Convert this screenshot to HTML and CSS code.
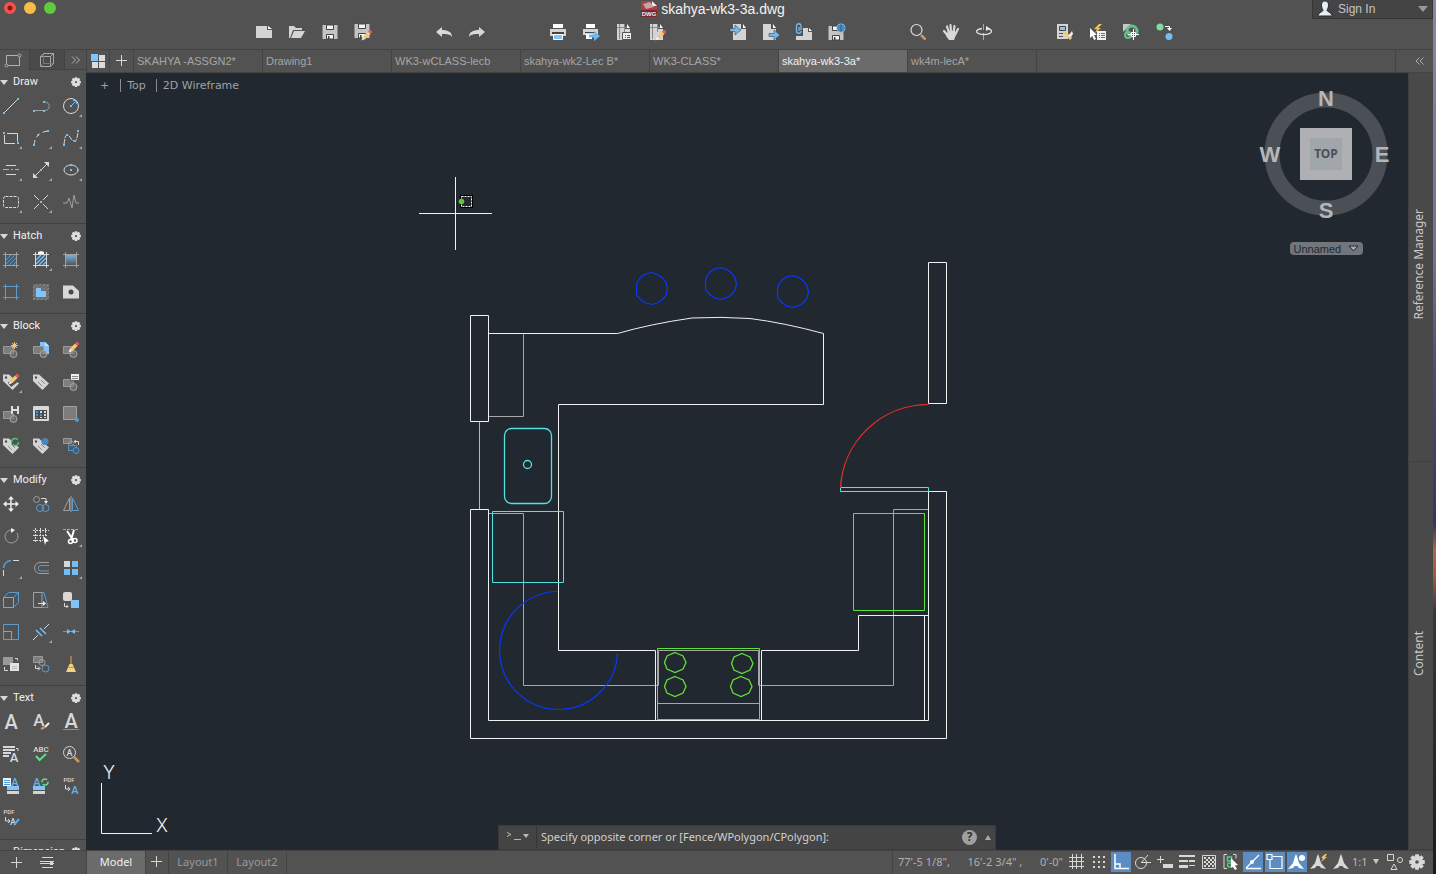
FILE: index.html
```html
<!DOCTYPE html>
<html lang="en">
<head>
<meta charset="utf-8">
<title>skahya-wk3-3a.dwg</title>
<link rel="stylesheet" href="styles.css">
</head>
<body>
<svg class="defs" aria-hidden="true">
  <symbol id="gear" viewBox="-8 -8 16 16"><g fill="currentColor"><g id="teeth"><path d="M-1.800-7.800h3.600l.5 3.500h-4.600zM-1.800 7.800h3.600l.5-3.500h-4.600z"/><path d="M-7.800-1.800v3.600l3.500.5v-4.600zM7.800-1.800v3.600l-3.500.5v-4.600z"/></g><use href="#teeth" transform="rotate(45)"/><path fill-rule="evenodd" d="M0-5.800A5.800 5.800 0 1 1 0 5.800 5.800 5.800 0 1 1 0-5.800zM0-1.800A1.800 1.800 0 1 0 0 1.800 1.800 1.800 0 1 0 0-1.800z"/></g></symbol>
  <g id="fly"><path fill="#a8a8a8" d="M11 8v3H8z"/></g>
  <g id="block"><path fill="#7d7d7d" stroke="#999" d="M-7.500-3.500h10v7h-10z"/><circle cx="2.500" cy="4" r="3.500" fill="#7d7d7d" fill-opacity=".6" stroke="#a5a5a5"/></g>
  <g id="tag"><path fill="#d4d4d4" d="M-8-7.500h6L8 1.500 1.500 8-8-1z"/><circle cx="-5" cy="-4.500" r="1.200" fill="#525252"/><path stroke="#8a8a8a" fill="none" d="M-3 0l4 4M0-2l4 4"/></g>
  <g id="pencil"><path fill="#f7c873" d="M-4 1.500L1-3.500 3.500-1-1.500 4z"/><path fill="#eee" d="M-4 1.500L-1.500 4-5.500 5.500z"/><path fill="#ea5a52" d="M1-3.500L3-5.500 5.500-3 3.500-1z"/></g>
  <g id="hatchframe"><path d="M-8-5.500H8M-8 5.500H8M-5.500-8V8M5.500-8V8"/></g>
  <g id="compass"><path d="M0-8C1.500-5 2-2 3 1l5 6-5-1-1.500-2h-3L-3 6l-5 1 5-6C-2-2-1.500-5 0-8z"/></g>
  <g id="sheet"><path fill="#d4d4d4" d="M-7-8h8v5h5v11H-7z"/><path fill="#fff" d="M3-8l3 4H3z"/></g>
  <g id="floppy"><path fill="#c4c4c4" d="M-7.500-7h15V7h-15z"/><path fill="#f4f4f4" stroke="#444" d="M-3.500-7h7v4.500h-7zM-3.500 2.500h7V7h-7z"/><path fill="#444" d="M-2 4h1.500v3H-2z"/></g>
  <g id="arrow"><path fill="#6fb9f0" d="M-5-1.500h5V-5L6 0 0 5V1.500h-5z"/></g>
</svg>

<div class="desktop">
<div class="app">
  <header class="top">
    <div class="titlebar">
      <div class="lights">
        <button class="light light-close" aria-label="Close"></button>
        <button class="light light-min" aria-label="Minimise"></button>
        <button class="light light-max" aria-label="Zoom"></button>
      </div>
      <h1 class="title">
        <svg class="doc" viewBox="0 0 16 16"><path fill="#a84044" d="M0 0h11l5 5v11H0z"/><path fill="#eee" d="M11 0l5 5h-5z"/><path fill="#c8a3a5" d="M2 3l7-2 4 5-8 2z"/><path fill="#7c2529" d="M0 9h16v7H0z"/><text x="8" y="15" text-anchor="middle">DWG</text></svg>
        skahya-wk3-3a.dwg
      </h1>
      <button class="signin">
        <svg class="face" viewBox="0 0 16 16"><path fill="#e8edf3" stroke="#1d2530" d="M8 0c3 0 3.500 2 3.500 4.500S10 8.500 10 9.500s4.500 2 5.500 5.500H.5C1.500 11.500 6 10.500 6 9.500S4.500 7 4.500 4.500 5 0 8 0z"/></svg>
        <span>Sign In</span>
        <svg class="caret" viewBox="0 0 10 6"><path d="M0 0h10L5 6z"/></svg>
      </button>
    </div>
    <nav class="toolbar" aria-label="Main toolbar">
      <div class="group">
        <button aria-label="New"><svg class="ic" viewBox="-11 -11 22 22"><path fill="#d4d4d4" d="M-8-6H3v4h5v8H-8z"/><path fill="#fff" d="M4-6l4 3H4z"/></svg></button>
        <button aria-label="Open"><svg class="ic" viewBox="-11 -11 22 22"><path fill="#d4d4d4" d="M-8 6V-6h5l2 2h6v2H-4l-3 8z"/><path fill="#d4d4d4" d="M-3-1H8L4 6H-6z"/></svg></button>
        <button aria-label="Save"><svg class="ic" viewBox="-11 -11 22 22"><use href="#floppy"/></svg></button>
        <button aria-label="Save As"><svg class="ic" viewBox="-11 -11 22 22"><use href="#floppy" x="-1" y="-1"/><use href="#pencil" x="4" y="3"/></svg></button>
      </div>
      <div class="group">
        <button aria-label="Undo"><svg class="ic" viewBox="-11 -11 22 22"><path fill="#d8d8d8" d="M-8 0l6-5v3C4-2 8 0 8 5 6 2 3 2-2 2v3z"/></svg></button>
        <button aria-label="Redo"><svg class="ic" viewBox="-11 -11 22 22"><path fill="#d8d8d8" d="M8 0L2-5v3C-4-2-8 0-8 5-6 2-3 2 2 2v3z"/></svg></button>
      </div>
      <div class="group">
        <button aria-label="Plot"><svg class="ic" viewBox="-11 -11 22 22"><path fill="#fff" d="M-5-8H5v4H-5z"/><path fill="#d4d4d4" d="M-8-3H8v7H-8z"/><path fill="#444" d="M-6 0H6v2H-6z"/><path fill="#82c4fa" stroke="#fff" d="M-4.500 2.500h9v5h-9z"/></svg></button>
        <button aria-label="Publish"><svg class="ic" viewBox="-11 -11 22 22"><path fill="#fff" d="M-5-8H4v4h-9z"/><path fill="#d4d4d4" d="M-8-3H7v6H-8z"/><path fill="#444" d="M-6 0H5v1H-6z"/><path fill="#fff" d="M-5 2h6v5h-6z"/><use href="#arrow" x="3" y="4"/></svg></button>
        <button aria-label="Page setup"><svg class="ic" viewBox="-11 -11 22 22"><use href="#sheet"/><path stroke="#888" d="M-7-4.500H3M-4.500-8V7M.5-8v8"/><path fill="#eee" stroke="#555" d="M-1.500.5h9v7h-9z"/><path stroke="#555" d="M1 3.500h1M3 3.500h3M1 5.500h1M3 5.500h3"/></svg></button>
        <button aria-label="Edit page setup"><svg class="ic" viewBox="-11 -11 22 22"><use href="#sheet"/><path stroke="#888" d="M-7-4.500H3M-4.500-8V7M.5-8v8"/><use href="#pencil" x="4" y="3"/></svg></button>
      </div>
      <div class="group">
        <button aria-label="Import"><svg class="ic" viewBox="-11 -11 22 22"><use href="#sheet" x="2"/><use href="#arrow" x="-3" y="-2" stroke="#444" stroke-width=".6"/></svg></button>
        <button aria-label="Export"><svg class="ic" viewBox="-11 -11 22 22"><use href="#sheet" x="-1"/><use href="#arrow" x="3" y="3" stroke="#444" stroke-width=".6"/></svg></button>
        <button aria-label="Attach"><svg class="ic" viewBox="-11 -11 22 22"><path fill="#d4d4d4" d="M-1-4h5v4h4v8H-8V4h7z"/><path fill="#fff" d="M5-4l3 3H5z"/><path fill="none" stroke="#6fb9f0" stroke-width="1.300" d="M-3-2v-4a2.200 2.200 0 0 0-4.500 0v5a2.200 2.200 0 0 0 4.500 0M-5-5v4"/></svg></button>
        <button aria-label="Save to web"><svg class="ic" viewBox="-11 -11 22 22"><use href="#floppy" x="-1" y="1"/><circle cx="4" cy="-4" r="4.500" fill="#6fb9f0"/><path fill="none" stroke="#2b5d86" d="M0-4h8M4-8v8M1-6h6M1-2h6"/></svg></button>
      </div>
      <div class="group">
        <button aria-label="Zoom view"><svg class="ic" viewBox="-11 -11 22 22"><circle cx="-1.500" cy="-2" r="5.500" fill="none" stroke="#ddd" stroke-width="1.200"/><path stroke="#c99a66" stroke-width="2.500" d="M3 3l4.500 4.500"/></svg></button>
        <button aria-label="Pan"><svg class="ic" viewBox="-11 -11 22 22"><path fill="none" stroke="#d8d8d8" stroke-width="2.200" stroke-linecap="round" d="M-7-1l4 5M-4-5.500L-2 1M-.5-7L0 1M3.500-6L2.500 1M7-3L4 3"/><path fill="#d8d8d8" d="M-3-1l7-.5 1 4L3 8h-5l-3-4z"/></svg></button>
        <button aria-label="Orbit"><svg class="ic" viewBox="-11 -11 22 22"><path stroke="#6fb9f0" d="M-.5-8V-2M-.5 1V8"/><path fill="none" stroke="#ddd" stroke-width="1.300" d="M-2-3.500C-5-3-7.500-2-7.500-.5S-4 2.500 0 2.500 7.500 1 7.500-.5 6-3 3-3.500"/><path fill="#eee" d="M2-6l4 2.500L2-1z"/></svg></button>
      </div>
      <div class="group">
        <button aria-label="Properties"><svg class="ic" viewBox="-11 -11 22 22"><path fill="#d4d4d4" d="M-8-8H3V7H-8z"/><path fill="#82c4fa" stroke="#444" d="M-5.500-5.500h6v4h-6z"/><path stroke="#555" d="M-6 1.500h4M-6 4.500h4"/><path stroke="#f7c873" stroke-width="3" d="M-1-.5l7 7.500"/><path fill="#eee" d="M7-1L3 4l3 1 2-3z"/></svg></button>
        <button aria-label="Quick select"><svg class="ic" viewBox="-11 -11 22 22"><path fill="#f7c15c" d="M1-8l-5 5h3l-2 4 6-5H0l4-4z"/><path fill="#fff" d="M-8-4v10l2.500-2L-4 8l2-1-2-4h3z"/><path fill="#f2f2f2" d="M-1-1h9v9h-9z"/><path stroke="#2f7fc5" d="M1 1.500h1M3 1.500h4M1 3.500h1M3 3.500h4M1 5.500h1M3 5.500h4"/></svg></button>
        <button aria-label="Geographic location"><svg class="ic" viewBox="-11 -11 22 22"><path fill="#c8c8c8" d="M-8-8h8l-8 8z"/><circle cx="1" cy="-1" r="5" fill="none" stroke="#66c08a" stroke-width="3"/><circle cx="-3" cy="3" r="3" fill="none" stroke="#66c08a" stroke-width="2"/><path stroke="#fff" fill="#555" d="M2.500-3V8M-3 2.500H8M.5.500h4v4h-4z"/></svg></button>
        <button aria-label="Migrate settings"><svg class="ic" viewBox="-11 -11 22 22"><circle cx="-4" cy="-5" r="3.500" fill="#7fdc9f"/><circle cx="5" cy="4.500" r="3.500" fill="#74bdf5"/><path fill="none" stroke="#fff" d="M1-5.500h4.500V-3"/><path fill="#fff" d="M3-4h5L5.500-1z"/></svg></button>
      </div>
    </nav>
  </header>

  <div class="body">
    <aside class="palette" aria-label="Tool palette">
      <div class="modes">
        <button class="mode mode-on" aria-label="2D"><svg class="ic" viewBox="-11 -11 22 22"><path fill="none" stroke="#b0b0b0" d="M-6.500 4V-4.500H5M6.500-3v8.500H-5"/><circle cx="6.500" cy="-4.500" r="1.500" fill="none" stroke="#b0b0b0"/><circle cx="-6.500" cy="5.500" r="1.500" fill="none" stroke="#b0b0b0"/></svg></button>
        <button class="mode" aria-label="3D"><svg class="ic" viewBox="-11 -11 22 22"><path fill="none" stroke="#a8a8a8" d="M-6.500-3.500h10v10h-10zM-6.500-3.500l3-3h10v10l-3 3M3.500-3.500l3-3"/><path fill="none" stroke="#777" d="M-3.500-6v9.500h9.500M-3.500 3.500l-3 3"/></svg></button>
        <button class="mode mode-more" aria-label="More"><svg class="chev" viewBox="0 0 10 8"><path d="M1 .5l3.500 3.500L1 7.500M5 .5l3.500 3.500L5 7.500"/></svg></button>
      </div>
      <div class="sections">
        <section class="section">
          <h2 class="head"><span class="tri"></span>Draw<button aria-label="Draw settings"><svg class="cog"><use href="#gear"/></svg></button></h2>
          <div class="tools">
            <button aria-label="Line"><svg class="ic" viewBox="-11 -11 22 22"><path class="s" d="M-7 7L7-7"/><path class="fb" d="M-8 6h2v2h-2zM6-8h2v2H6z"/></svg></button>
            <button aria-label="Polyline"><svg class="ic" viewBox="-11 -11 22 22"><path class="m" d="M-7 4.500H4a4.200 4.200 0 0 0 0-8.500H2"/><path class="fb" d="M-8 4h2v2h-2zM2 4h2v2H2zM2-5h2v2H2z"/></svg></button>
            <button aria-label="Circle"><svg class="ic" viewBox="-11 -11 22 22"><circle class="s" r="7.500"/><path class="fb" d="M-1-1h2v2h-2z"/><path class="b" d="M1-1l4-4M2-5.500h3.500V-2"/><use href="#fly"/></svg></button>
            <button aria-label="Rectangle"><svg class="ic" viewBox="-11 -11 22 22"><path class="s" d="M-4-4.500H6.500v8M4 5.500H-6.500V-3"/><path class="fb" d="M-8-6h2v2h-2zM6 4h2v2H6z"/><use href="#fly"/></svg></button>
            <button aria-label="Arc"><svg class="ic" viewBox="-11 -11 22 22"><path class="s" stroke-dasharray="5 3" d="M-7 7C-6-2-1-6 7-7"/><path class="fb" d="M-8 6h2v2h-2zM-4-4h2v2h-2zM6-8h2v2H6z"/><use href="#fly"/></svg></button>
            <button aria-label="Spline"><svg class="ic" viewBox="-11 -11 22 22"><path class="s" stroke-dasharray="5 1" d="M-7 6C-6 0-6-3-3.500-3S0 3 3 3 6 0 7-6"/><path class="fb" d="M-8 6h2v2h-2zM-5-4h2v2h-2zM3 2h2v2H3zM6-8h2v2H6z"/><use href="#fly"/></svg></button>
            <button aria-label="Multiline"><svg class="ic" viewBox="-11 -11 22 22"><path class="s" d="M-5-4.500H5M-5 4.500H5"/><path class="b" d="M-8-.5h6M0-.5h2M4-.5h4"/><use href="#fly"/></svg></button>
            <button aria-label="Construction line"><svg class="ic" viewBox="-11 -11 22 22"><path class="s" d="M-6 6L6-6"/><path class="fl" d="M-8 8v-5l5 5zM8-8v5L3-8z"/><path class="fb" d="M-1-1h2v2h-2z"/><use href="#fly"/></svg></button>
            <button aria-label="Ellipse"><svg class="ic" viewBox="-11 -11 22 22"><ellipse class="s" rx="7" ry="5"/><path class="fb" d="M-1-6h2v2h-2zM-1-1h2v2h-2zM6-1h2v2H6z"/><use href="#fly"/></svg></button>
            <button aria-label="Revision cloud"><svg class="ic" viewBox="-11 -11 22 22"><rect class="s" x="-7.500" y="-5.500" width="15" height="11" rx="2" stroke-dasharray="3 1"/><use href="#fly"/></svg></button>
            <button aria-label="Point"><svg class="ic" viewBox="-11 -11 22 22"><path class="s" d="M-7-7l5 5M7-7L2-2M-7 7l5-5M2 2l5 5"/><path class="fb" d="M-1-1h2v2h-2z"/><use href="#fly"/></svg></button>
            <button aria-label="Break line"><svg class="ic" viewBox="-11 -11 22 22"><path class="m" d="M-8 1h4l2-5L1 6 3-7 5 1h3"/></svg></button>
          </div>
        </section>
        <section class="section">
          <h2 class="head"><span class="tri"></span>Hatch<button aria-label="Hatch settings"><svg class="cog"><use href="#gear"/></svg></button></h2>
          <div class="tools">
            <button aria-label="Hatch"><svg class="ic" viewBox="-11 -11 22 22"><path fill="#3d5f7c" d="M-5-5H5V5H-5z"/><path class="b" d="M-5 0l5-5M-5 4l9-9M-2 5l7-7M2 5l3-3" opacity=".6"/><use href="#hatchframe" class="m"/></svg></button>
            <button aria-label="Hatch edit"><svg class="ic" viewBox="-11 -11 22 22"><path class="b" stroke-width="1.500" d="M-5 0l5-5M-5 4l9-9M-2 5l7-7M2 5l3-3"/><use href="#hatchframe" class="s"/><path fill="#fff" d="M-3-8l3-1 3 1v2h-6z"/><use href="#fly"/></svg></button>
            <button aria-label="Gradient"><svg class="ic" viewBox="-11 -11 22 22"><defs><linearGradient id="gr" x2="0" y2="1"><stop stop-color="#74b4e4"/><stop offset="1" stop-color="#555"/></linearGradient></defs><path fill="url(#gr)" d="M-5-5H5V5H-5z"/><use href="#hatchframe" class="m"/></svg></button>
            <button aria-label="Boundary"><svg class="ic" viewBox="-11 -11 22 22"><use href="#hatchframe" class="d"/></svg></button>
            <button aria-label="Region"><svg class="ic" viewBox="-11 -11 22 22"><path fill="#6b6b6b" d="M-8-8H8V8H-8z"/><path class="m" stroke-dasharray="1 1" d="M-8-4l4-4M-8 0l8-8M-8 4L4-8M-8 8L8-8M-4 8L8-4M0 8l8-8M4 8l4-4"/><path fill="#82c4fa" d="M-5-4h5v3h5v6H-5z"/></svg></button>
            <button aria-label="Wipeout"><svg class="ic" viewBox="-11 -11 22 22"><path class="fl" d="M-8-6.500H2L8-1v7.500H-8z"/><circle r="2.500" fill="#484848"/></svg></button>
          </div>
        </section>
        <section class="section">
          <h2 class="head"><span class="tri"></span>Block<button aria-label="Block settings"><svg class="cog"><use href="#gear"/></svg></button></h2>
          <div class="tools">
            <button aria-label="Create block"><svg class="ic" viewBox="-11 -11 22 22"><use href="#block"/><path stroke="#f7c15c" d="M3.500-8v7M0-4.500h7M1-7l5 5M6-7l-5 5"/><circle cx="3.500" cy="-4.500" r="2" fill="#f7c873"/></svg></button>
            <button aria-label="Insert block"><svg class="ic" viewBox="-11 -11 22 22"><path fill="#82c4fa" d="M-1-8h5l4 4v8H-1z"/><path fill="#c9e5fc" d="M4-8l4 4H4z"/><use href="#block"/></svg></button>
            <button aria-label="Edit block"><svg class="ic" viewBox="-11 -11 22 22"><use href="#block"/><use href="#pencil" x="3" y="-3"/></svg></button>
            <button aria-label="Edit attributes"><svg class="ic" viewBox="-11 -11 22 22"><use href="#tag"/><path fill="#525252" d="M-3 1L6-8l2 7-8 6z"/><use href="#pencil" x="3" y="-3"/><use href="#fly"/></svg></button>
            <button aria-label="Define attributes"><svg class="ic" viewBox="-11 -11 22 22"><use href="#tag"/></svg></button>
            <button aria-label="Block properties"><svg class="ic" viewBox="-11 -11 22 22"><use href="#block" y="1"/><path fill="#eee" stroke="#555" d="M-.5-8.500h9v7h-9z"/><path stroke="#888" d="M1-5.500h6M1-3.500h6"/></svg></button>
            <button aria-label="Save block"><svg class="ic" viewBox="-11 -11 22 22"><use href="#block" y="1"/><path fill="#ddd" d="M0-8h8v8H0z"/><path fill="#555" d="M2-8h4v3H2zM2-3h4v3H2z"/></svg></button>
            <button aria-label="Block table"><svg class="ic" viewBox="-11 -11 22 22"><rect class="fl" x="-8" y="-8" width="16" height="15" rx="1"/><path fill="#4a4a4a" d="M-6-4H6v9H-6z"/><path fill="#3b94dc" d="M-5-3h2v2h-2zM-5 0h2v2h-2zM-5 3h2v1h-2zM-1 0h2v2h-2z"/><path class="fl" d="M-1-3h2v2h-2zM3-3h2v2H3zM3 0h2v2H3zM-1 3h2v1h-2zM3 3h2v1H3z"/></svg></button>
            <button aria-label="Base point"><svg class="ic" viewBox="-11 -11 22 22"><path fill="#7d7d7d" stroke="#a0a0a0" d="M-7.500-7.500h13v13h-13z"/><circle cx="6" cy="6" r="2" fill="#4a9ddb"/></svg></button>
            <button aria-label="Sync attributes"><svg class="ic" viewBox="-11 -11 22 22"><use href="#tag"/><circle cx="4" cy="-4" r="3.500" fill="#525252" stroke="#46c878" stroke-width="1.500" stroke-dasharray="8 3"/></svg></button>
            <button aria-label="Manage attributes"><svg class="ic" viewBox="-11 -11 22 22"><use href="#tag"/><circle cx="4" cy="-4.500" r="3.500" fill="#4a86b8"/></svg></button>
            <button aria-label="Replace block"><svg class="ic" viewBox="-11 -11 22 22"><path fill="#777" stroke="#999" d="M-7.500-7.500h8v5h-8z"/><circle cx="0" cy="-2.500" r="2.500" fill="none" stroke="#999"/><path fill="#386085" stroke="#5794c4" d="M-2.500-.5h8v5h-8z"/><circle cx="5" cy="4.500" r="3" fill="#386085" stroke="#5794c4"/><path class="s" d="M3-4.500h4.500V-1M5-6L3-4.500 5-3"/></svg></button>
          </div>
        </section>
        <section class="section">
          <h2 class="head"><span class="tri"></span>Modify<button aria-label="Modify settings"><svg class="cog"><use href="#gear"/></svg></button></h2>
          <div class="tools">
            <button aria-label="Move"><svg class="ic" viewBox="-11 -11 22 22"><path stroke="#eee" stroke-width="1.500" d="M0-6V6M-6 0H6"/><path fill="#eee" d="M0-8l3 3.500h-6zM0 8l3-3.500h-6zM-8 0l3.500-3v6zM8 0L4.500-3v6z"/></svg></button>
            <button aria-label="Copy"><svg class="ic" viewBox="-11 -11 22 22"><circle class="m" cx="-4.500" cy="-4.500" r="3"/><circle class="d" cx="-1" cy="4" r="3.500"/><circle class="d" cx="4.500" cy="4" r="3.500"/><path class="s" d="M0-5.500h5V-3"/><path fill="#eee" d="M3-3h4L5 0z"/></svg></button>
            <button aria-label="Mirror"><svg class="ic" viewBox="-11 -11 22 22"><path class="m" d="M-1.500-6v12.500h-6zM0-8V8"/><path class="d" d="M1.500-6v12.500h6z"/></svg></button>
            <button aria-label="Rotate"><svg class="ic" viewBox="-11 -11 22 22"><path class="m" d="M1-6a6.500 6.500 0 1 0 5 3"/><path fill="#eee" d="M0-8l4 2-4 3z"/></svg></button>
            <button aria-label="Stretch"><svg class="ic" viewBox="-11 -11 22 22"><path class="s" stroke-dasharray="2 1" d="M-8-5.500H8M-8-.5H7M-8 4.500H2M-5.500-8V7M-.5-8V7M4.500-8v7"/><path fill="#fff" d="M2 0l6 5-3 1-1 3z"/></svg></button>
            <button aria-label="Trim"><svg class="ic" viewBox="-11 -11 22 22"><path class="b" stroke-dasharray="3 1" d="M-8-6.500H8"/><path stroke="#fff" stroke-width="2" d="M-4-5L2 4M3-6L0 4"/><circle cx="4" cy="4.500" r="2" fill="none" stroke="#fff" stroke-width="1.500"/><circle cx="-.5" cy="5.500" r="2" fill="none" stroke="#fff" stroke-width="1.500"/><use href="#fly"/></svg></button>
            <button aria-label="Fillet"><svg class="ic" viewBox="-11 -11 22 22"><path class="d" stroke-width="1.500" d="M-7.500 0C-7-4-4-7 0-7.500"/><path class="s" d="M-7.500 2v6M2-7.500h6"/><use href="#fly"/></svg></button>
            <button aria-label="Offset"><svg class="ic" viewBox="-11 -11 22 22"><path class="m" d="M8-5.500H-1a5.500 5.500 0 0 0 0 11h9"/><path class="d" d="M8-2.500H0a2.500 2.500 0 0 0 0 5.500h8"/></svg></button>
            <button aria-label="Array"><svg class="ic" viewBox="-11 -11 22 22"><path class="fl" d="M-7-7h6v6h-6z"/><path fill="#74bdf5" d="M1-7h6v6H1zM-7 1h6v6h-6zM1 1h6v6H1z"/><use href="#fly"/></svg></button>
            <button aria-label="Extrude"><svg class="ic" viewBox="-11 -11 22 22"><path class="d" d="M-7.500-2.500l5-5h10v10l-5 5M2.500-2.500l5-5"/><path class="m" d="M-7.500-2.500h10v10h-10z"/></svg></button>
            <button aria-label="Taper"><svg class="ic" viewBox="-11 -11 22 22"><path class="m" d="M1-7.500h-8.500v15H1z"/><path class="d" d="M1-7.500h2l4 15H1"/><path class="s" d="M-3 3.500h6"/><path fill="#eee" d="M2 1l3 2.500L2 6z"/></svg></button>
            <button aria-label="Change space"><svg class="ic" viewBox="-11 -11 22 22"><rect class="fl" x="-8" y="-8" width="9" height="9" rx="2"/><path fill="#82c4fa" d="M0 0h8v8H0z"/><path class="s" d="M-6.500 3v3.500H-3M-4.500 5l1.500 1.500L-4.500 8"/></svg></button>
            <button aria-label="Scale"><svg class="ic" viewBox="-11 -11 22 22"><path class="d" d="M-7.500-7.500h15v15h-15z"/><path class="m" d="M-7.500-.5h8v8"/></svg></button>
            <button aria-label="Break"><svg class="ic" viewBox="-11 -11 22 22"><path class="s" d="M-8 8l5-5M3-3l5-5"/><path class="b" stroke-width="1.500" d="M-5-2l6 6M-1-4l6 6"/><use href="#fly"/></svg></button>
            <button aria-label="Join"><svg class="ic" viewBox="-11 -11 22 22"><path class="d" d="M-8-.5H8"/><path fill="#74bdf5" d="M-4-3l4 2.500L-4 2zM4-3L0-.5 4 2z"/></svg></button>
            <button aria-label="Draw order"><svg class="ic" viewBox="-11 -11 22 22"><path fill="#9a9a9a" d="M-8-7H2v8H-8z"/><path fill="#e4e4e4" d="M-1-1h9v8h-9z"/><path stroke="#bbb" d="M1 2.500h5M1 4.500h5"/><path class="s" d="M4-5.500h2.500v2M-6.500 3v3.500H-3"/></svg></button>
            <button aria-label="Copy nested"><svg class="ic" viewBox="-11 -11 22 22"><path fill="#7d7d7d" stroke="#999" d="M-7.500-7.500h9v6h-9z"/><circle class="m" cx="1" cy="-1.500" r="3"/><circle class="d" cx="4.500" cy="4.500" r="3.500"/><path class="s" d="M-5.500 1v3.500h4M-3 2.500l2 2-2 2"/></svg></button>
            <button aria-label="Purge"><svg class="ic" viewBox="-11 -11 22 22"><path stroke="#b98a55" stroke-width="1.500" d="M0-8v9"/><path fill="#f7d27c" d="M-1.500 0h3L5 8H-5z"/><path stroke="#c98f42" d="M-2.500 3.500h5"/></svg></button>
          </div>
        </section>
        <section class="section">
          <h2 class="head"><span class="tri"></span>Text<button aria-label="Text settings"><svg class="cog"><use href="#gear"/></svg></button></h2>
          <div class="tools">
            <button aria-label="Multiline text"><svg class="ic" viewBox="-11 -11 22 22"><text class="g18" y="7">A</text></svg></button>
            <button aria-label="Text style"><svg class="ic" viewBox="-11 -11 22 22"><text class="g16" x="-2" y="4">A</text><path stroke="#eee" stroke-width="2" d="M8 1L4 5"/><path stroke="#c99a66" stroke-width="2.500" d="M4 5L0 7"/></svg></button>
            <button aria-label="Single line text"><svg class="ic" viewBox="-11 -11 22 22"><text class="g18" y="6">A</text><path class="d" d="M-8 7.500H8"/></svg></button>
            <button aria-label="Text align"><svg class="ic" viewBox="-11 -11 22 22"><path stroke="#d8d8d8" stroke-width="2" d="M-8-7H4M-8-4H4M-8-1H0M-8 2h6"/><text class="g12" x="3" y="8">A</text><path class="s" d="M5-5.500h2V-3"/></svg></button>
            <button aria-label="Spell check"><svg class="ic" viewBox="-11 -11 22 22"><text class="g7" y="-2">ABC</text><path fill="none" stroke="#5fdc8c" stroke-width="2" d="M-5 2l3.500 4L5 0"/></svg></button>
            <button aria-label="Find text"><svg class="ic" viewBox="-11 -11 22 22"><circle class="s" cx="-1.500" cy="-1.500" r="6"/><text class="g9" x="-1.500" y="2">A</text><path stroke="#c99a66" stroke-width="2.500" d="M3 3l5 5"/></svg></button>
            <button aria-label="Field"><svg class="ic" viewBox="-11 -11 22 22"><text class="g10 blue" x="4" y="0">A</text><path fill="#f2f2f2" d="M-8-8h8v8h-8z"/><path stroke="#4a9ddb" d="M-7-5.500h6M-7-3.500h6M-7-1.500h6"/><path fill="#82c4fa" d="M-4 0H8v4H-4z"/><path fill="#d4d4d4" d="M-4 5H8v3H-4z"/></svg></button>
            <button aria-label="Update field"><svg class="ic" viewBox="-11 -11 22 22"><text class="g10 blue" x="-4" y="0">A</text><circle cx="4" cy="-4" r="3" fill="none" stroke="#5fdc8c" stroke-width="1.500" stroke-dasharray="7 2"/><path fill="#82c4fa" d="M-8 0H4v4H-8z"/><path fill="#d4d4d4" d="M-8 5H4v3H-8z"/></svg></button>
            <button aria-label="PDF to text"><svg class="ic" viewBox="-11 -11 22 22"><text class="g6" x="-2" y="-4">PDF</text><path class="s" d="M-5.500-1v4h4M-3 1l2 2-2 2"/><text class="g11 blue" x="4" y="8">A</text></svg></button>
            <button aria-label="PDF text settings"><svg class="ic" viewBox="-11 -11 22 22"><text class="g6" x="-2" y="-4">PDF</text><path class="s" d="M-5.500-1v4h4M-3 1l2 2-2 2"/><text class="g9" x="2" y="7">A</text><path stroke="#5aa9e6" stroke-width="2" d="M3 7l5-6"/></svg></button>
          </div>
        </section>
        <section class="section">
          <h2 class="head"><span class="tri"></span>Dimension<button aria-label="Dimension settings"><svg class="cog"><use href="#gear"/></svg></button></h2>
        </section>
      </div>
      <footer class="foot">
        <button aria-label="Add palette"><svg class="ic" viewBox="-11 -11 22 22"><path class="s" d="M-5-.5H6M.5-6V5"/></svg></button>
        <button aria-label="Palette options"><svg class="ic" viewBox="-11 -11 22 22"><path class="s" d="M-5-5.500H6M-7-1.500H7M-7 .5H7M-5 4.500H6"/><path class="fl" d="M3-2h3v4H3z"/></svg></button>
      </footer>
    </aside>

    <main class="main">
      <div class="tabs">
        <button class="tabicon" aria-label="Start"><svg class="ic" viewBox="-11 -11 22 22"><path fill="#82c4fa" d="M-7-7h7v7h-7z"/><path fill="#dcdcdc" d="M1-6h6v6H1zM-6 1h6v6h-6zM1 1h6v6H1z"/></svg></button>
        <button class="tabicon tabplus" aria-label="New tab"><svg class="ic" viewBox="-11 -11 22 22"><path class="s" d="M-6-.5H5M-.5-6V5"/></svg></button>
        <button class="tab">SKAHYA -ASSGN2*</button>
        <button class="tab">Drawing1</button>
        <button class="tab">WK3-wCLASS-lecb</button>
        <button class="tab">skahya-wk2-Lec B*</button>
        <button class="tab">WK3-CLASS*</button>
        <button class="tab tab-on">skahya-wk3-3a*</button>
        <button class="tab">wk4m-lecA*</button>
        <button class="collapse" aria-label="Collapse"><svg class="chev" viewBox="0 0 10 8"><path d="M4.500.5L1 4l3.500 3.500M8.500.5L5 4l3.500 3.500"/></svg></button>
      </div>

      <div class="work">
        <div class="canvas">
          <svg class="plan" viewBox="86 73 1322 777" role="img" aria-label="Kitchen floor plan">
            <g fill="none" stroke="#a6a6a6">
              <path d="M488.500 416.500H523.500V333.500"/>
              <path d="M488.500 513.500H523.500V685.500H658.500V650.500H758.500V685.500H893.500V509.500H928.500"/>
            </g>
            <g fill="none" stroke="#f0f0f0">
              <path d="M470.500 315.500h18v106h-18z"/>
              <path d="M488.500 333.500H617.500Q650 324 692 318Q721 316.500 750 318.500Q785 323 823.500 333.500V404.500H558.500V650.500H655.500V720.500"/>
              <path d="M928.500 262.500h18v141h-18z"/>
              <path d="M488.500 509.500H470.500V738.500H946.500V491.500H928.500V720.500H488.500z"/>
              <path d="M761.500 720.500V650.500H858.500V615.500H928.500M924.500 615.500V720.500"/>
              <path d="M455.500 177V250M419 213.500H492"/>
            </g>
            <g fill="none" stroke="#52e2e2">
              <path d="M479.500 422V509M492.500 511.500h71v71h-71zM840.500 487.500h88v4h-88z"/>
              <rect x="504.500" y="428.500" width="47" height="75" rx="7" stroke-width="1.300"/>
              <circle cx="527.500" cy="464.500" r="4" stroke-width="1.300"/>
            </g>
            <g fill="none" stroke="#0638ff" stroke-width="1.200">
              <path id="stool" d="M651.500 272.500l6 2 4.500 3 4 5 1.500 6-1.500 7-4 4.500-5 3-5.500 1.500-5.500-1.500-5-3-4-4.500-.5-3v-8l1-2.500 3.500-5 4.500-3z"/>
              <use href="#stool" x="69" y="-5"/>
              <use href="#stool" x="141" y="3"/>
              <path d="M557.500 591.500A59 59 0 1 0 617.500 653"/>
            </g>
            <path fill="none" stroke="#f03028" stroke-width="1.200" d="M928.500 404.500A88 88 0 0 0 840.500 488"/>
            <g fill="none" stroke="#62e03a">
              <path d="M853.500 513.500h71v97h-71zM657.500 648.500h102v71h-102zM657.500 703.500h102"/>
              <path id="burner" stroke-width="1.300" d="M675 652.500l8 3.500 3 6.500-3 6.500-8 3.500-8-3.500-2.500-6.500 2.500-6.500z"/>
              <use href="#burner" y="24"/>
              <use href="#burner" x="67" y="1"/>
              <use href="#burner" x="66" y="24"/>
            </g>
            <path fill="none" stroke="#a6a6a6" d="M658.500 650.500h100"/>
            <path fill="#000" d="M460 195h13v13h-13z"/>
            <path fill="#222830" stroke="#fff" stroke-dasharray="2 1" d="M461.500 196.500h10v10h-10z"/>
            <circle cx="461.500" cy="201.500" r="2.800" fill="#5fc63a"/>
          </svg>
          <div class="viewlabels"><button>+</button><button>Top</button><button>2D Wireframe</button></div>
          <div class="cube">
            <svg class="ring" viewBox="0 0 134 136">
              <circle cx="67" cy="68" r="54" fill="none" stroke="#4b5057" stroke-width="15"/>
              <path fill="#aeb0b3" d="M41 42h52v52H41z"/><path fill="#a1a6ab" d="M51 52h32v32H51z"/>
              <text class="top-face" x="67" y="72">TOP</text>
              <g class="dirs"><text x="67" y="20">N</text><text x="67" y="132">S</text><text x="11" y="76">W</text><text x="123" y="76">E</text></g>
            </svg>
            <label class="ucsname"><select aria-label="Coordinate system"><option>Unnamed</option></select><svg class="drop" viewBox="0 0 11 7"><path d="M1 1h9L5.500 6z"/></svg></label>
          </div>
          <svg class="ucs" viewBox="0 0 76 76" aria-label="UCS icon">
            <path fill="none" stroke="#f0f0f0" d="M3.500 20V70.500H54"/>
            <text x="11" y="16">Y</text><text x="64" y="69">X</text>
          </svg>
          <div class="command">
            <button class="prompt" aria-label="Recent commands"><svg viewBox="0 0 24 12"><path fill="none" stroke="#b8b8b8" d="M1 1.500l4 2-4 2M8 8.500h7"/><path fill="#b8b8b8" d="M17 3h6l-3 4z"/></svg></button>
            <label class="cmdtext" for="cmd">Specify opposite corner or [Fence/WPolygon/CPolygon]:</label>
            <input class="cmdinput" id="cmd" type="text">
            <button class="help" aria-label="Help">?</button>
            <button class="up" aria-label="Expand"><svg viewBox="0 0 6 5"><path d="M0 5h6L3 0z"/></svg></button>
          </div>
        </div>
        <aside class="side">
          <button class="sidetab"><span>Reference Manager</span></button>
          <button class="sidetab"><span>Content</span></button>
        </aside>
      </div>

      <footer class="status">
        <button class="lay lay-on">Model</button>
        <button class="lay-plus" aria-label="New layout"><svg class="ic" viewBox="-11 -11 22 22"><path class="s" d="M-6-.5H5M-.5-6V5"/></svg></button>
        <button class="lay">Layout1</button>
        <button class="lay">Layout2</button>
        <div class="coords"><span>77'-5 1/8",</span><span>16'-2 3/4" ,</span><span>0'-0"</span></div>
        <div class="toggles">
          <button aria-label="Grid"><svg class="ic" viewBox="-11 -11 22 22"><path class="s" d="M-8-4.500H7M-8-.5H7M-8 4.500H7M-4.500-8V7M-.5-8V7M4.500-8V7"/></svg></button>
          <button aria-label="Snap"><svg class="ic" viewBox="-11 -11 22 22"><path stroke="#d8d8d8" stroke-width="2" stroke-dasharray="2 3" d="M-6-5H6M-6 0H6M-6 5H6"/></svg></button>
          <button class="on" aria-label="Ortho"><svg class="ic" viewBox="-11 -11 22 22"><path fill="none" stroke="#fff" stroke-width="1.500" d="M-6-8V6.500H8M-6 2h5v4"/></svg></button>
          <button aria-label="Polar"><svg class="ic" viewBox="-11 -11 22 22"><circle class="s" cx="-2" cy="1" r="5.500"/><path class="s" d="M-2 .5H8M-2 1l7-8"/></svg></button>
          <button aria-label="Dynamic input"><svg class="ic" viewBox="-11 -11 22 22"><path class="s" d="M-8-2.500h7M-4.500-6v7"/><path class="fl" d="M-2 2H8v4H-2z"/></svg></button>
          <button aria-label="Lineweight"><svg class="ic" viewBox="-11 -11 22 22"><path fill="#d8d8d8" d="M-8-7H8v2H-8zM-8-2h9v2h-9zM2-2h6v2H2zM-8 3h9v3h-9zM2 3h6v1H2z"/></svg></button>
          <button aria-label="Transparency"><svg class="ic" viewBox="-11 -11 22 22"><path class="s" d="M-6.500-6.500h13v13h-13z"/><path stroke="#d8d8d8" stroke-width="2" stroke-dasharray="2 2" d="M-5-4H6M-5 0H6M-5 4H6"/><path stroke="#d8d8d8" stroke-width="2" stroke-dasharray="2 2" d="M-3-2H6M-3 2H6"/></svg></button>
          <button aria-label="Selection cycling"><svg class="ic" viewBox="-11 -11 22 22"><path class="s" d="M-4-7.500h-3v14h3M2-7.500h3v4"/><path fill="none" stroke="#53cf85" stroke-width="1.500" d="M-3.500-5h4v4h-4z"/><circle cx="-1.500" cy="3" r="2" fill="none" stroke="#53cf85" stroke-width="1.500"/><path fill="#fff" d="M0-4l7 7-3 .5L6 7 4 8 2 5 0 6z"/></svg></button>
          <button class="on" aria-label="Snap tracking"><svg class="ic" viewBox="-11 -11 22 22"><path fill="none" stroke="#fff" stroke-width="1.300" d="M-7 6.500H8M-7 6L6-7"/><circle cx="-1" cy="0" r="2" fill="#fff"/></svg></button>
          <button class="on" aria-label="Object snap"><svg class="ic" viewBox="-11 -11 22 22"><path fill="none" stroke="#fff" stroke-width="1.200" d="M-2-5.500h9v12h-12V-2M-8-7.500h5v5h-5z"/></svg></button>
          <button class="on" aria-label="Annotation visibility"><svg class="ic" viewBox="-11 -11 22 22"><use href="#compass" x="-1" fill="#fff"/><circle cx="5" cy="-4" r="3" fill="#fff"/></svg></button>
          <button aria-label="Auto scale"><svg class="ic" viewBox="-11 -11 22 22"><use href="#compass" x="-1" fill="#d8d8d8"/><path fill="#f7c15c" d="M6-8L2-4h2l-2 4 6-5H6l2-3z"/></svg></button>
          <button aria-label="Annotation scale"><svg class="ic" viewBox="-11 -11 22 22"><use href="#compass" fill="#d8d8d8"/></svg></button>
        </div>
        <label class="scale"><select aria-label="Scale"><option>1:1</option></select><svg class="sdrop" viewBox="0 0 6 5"><path d="M0 0h6L3 5z"/></svg></label>
        <div class="toggles">
          <button aria-label="Isolate objects"><svg class="ic" viewBox="-11 -11 22 22"><path class="s" d="M-7.500-7.500h6v6h-6zM-4 7.500l3-5.500 3 5.500z"/><circle class="s" cx="5" cy="-2" r="2.500"/></svg></button>
          <button aria-label="Settings"><svg class="biggear"><use href="#gear"/></svg></button>
        </div>
      </footer>
    </main>
  </div>
</div>
</div>
</body>
</html>
```

FILE: styles.css
```css
* { box-sizing: border-box; }
body { margin: 0; font-family: "Liberation Sans", Arial, sans-serif; color: #d8d8d8; }
button, select, input { font: inherit; color: inherit; background: none; border: 0; padding: 0; margin: 0; }
button { display: flex; align-items: center; justify-content: center; }
.defs { position: absolute; width: 0; height: 0; }
.desktop {
  height: 100vh;
  padding-right: 3px;
  background: linear-gradient(#8a86a3 0, #6d7391 30%, #4c4d72 42%, #35365c 60%, #a8684c 63%, #9d5a41 66%, #3a3540 70%, #171a24 100%);
}
.app { height: 100%; display: flex; flex-direction: column; background: #525252; overflow: hidden; }

/* drawing classes for icons */
.ic { width: 22px; height: 22px; display: block; flex: none; overflow: visible; }
.s { stroke: #d8d8d8; fill: none; }
.m { stroke: #a0a0a0; fill: none; }
.b { stroke: #74bdf5; fill: none; }
.d { stroke: #5b9bcd; fill: none; }
.fl { fill: #d8d8d8; }
.fb { fill: #74bdf5; }
.chev { width: 10px; height: 8px; fill: none; stroke: #b0b0b0; }
.ic text { fill: #d8d8d8; font-family: Roboto, sans-serif; font-weight: 500; text-anchor: middle; }
.ic .blue { fill: #64b1ec; }
.g18 { font-size: 20px; }
.g16 { font-size: 17px; }
.g12 { font-size: 13px; }
.g11 { font-size: 11px; }
.g10 { font-size: 11px; }
.g9 { font-size: 9px; }
.g7 { font-size: 8px; }
.g6 { font-size: 6px; }

/* header */
.top { height: 50px; flex: none; border-bottom: 1px solid #444; }
.titlebar { height: 18px; display: grid; grid-template-columns: 120px 1fr 121px; }
.lights { display: flex; gap: 8px; padding: 2px 0 0 4px; }
.light { width: 12px; height: 12px; border-radius: 50%; }
.light-close { background: radial-gradient(circle, #8f1512 0 2px, #f0544c 3px); }
.light-min { background: #f7bd45; }
.light-max { background: #5ecb3e; }
.title { margin: 0; padding: 0 6px 2px 0; display: flex; align-items: center; justify-content: center; gap: 4px; font-size: 14px; line-height: 16px; font-weight: normal; color: #f2f2f2; }
.doc { width: 16px; height: 16px; }
.doc text { font-size: 6px; font-weight: bold; fill: #eee; }
.signin { height: 19px; background: #444; border: 1px solid #363636; border-top: 0; font-size: 12px; color: #c4c4c4; padding: 0 4px; gap: 5px; justify-content: flex-start; }
.face { width: 16px; height: 16px; }
.caret { width: 10px; height: 6px; fill: #999; margin-left: auto; }
.toolbar { height: 28px; display: flex; justify-content: center; gap: 48px; padding-right: 6px; }
.group { display: flex; }
.group button { width: 33px; height: 28px; }

.body { flex: 1; min-height: 0; display: flex; }

/* palette */
.palette { width: 86px; flex: none; display: flex; flex-direction: column; }
.modes { height: 20px; flex: none; display: flex; }
.mode { flex: 1; border-right: 1px solid #434343; border-bottom: 1px solid #434343; background: #4a4a4a; }
.mode-on { width: 30px; flex: none; background: #525252; border-bottom: 0; padding-right: 4px; }
.mode-more { width: 21px; flex: none; background: #525252; border-right: 0; }
.sections { flex: 1; min-height: 0; overflow: hidden; }
.section { padding-bottom: 5px; border-bottom: 1px solid #414141; }
.head { height: 20px; margin: 0; padding: 4px 5px 0 0; display: flex; align-items: center; font: 11px/16px Roboto, "Liberation Sans", sans-serif; color: #f0f0f0; }
.head button { margin-left: auto; }
.tri { border: 4px solid transparent; border-top: 5px solid #d8d8d8; border-bottom: 0; margin-right: 5px; }
.cog { width: 10px; height: 10px; color: #e0e0e0; }
.tools { display: grid; grid-template-columns: repeat(3, 22px); column-gap: 8px; }
.tools button { height: 32px; }
.foot { height: 24px; flex: none; display: flex; gap: 9px; padding-left: 5px; border-top: 1px solid #444; }

/* document tabs */
.main { flex: 1; min-width: 0; display: flex; flex-direction: column; }
.tabs { height: 23px; flex: none; display: flex; border-left: 1px solid #444; border-bottom: 1px solid #444; }
.tabicon { width: 23px; border-right: 1px solid #444; }
.tabplus { width: 24px; }
.tab { width: 129px; flex: 0 1 auto; justify-content: flex-start; padding-left: 3px; border-right: 1px solid #444; font-size: 11px; color: #a6a6a6; white-space: nowrap; }
.tab-on { background: #6b6b6b; color: #f0f0f0; }
.collapse { width: 38px; margin-left: auto; border-left: 1px solid #444; padding-left: 11px; }

/* drawing area */
.work { flex: 1; min-height: 0; display: flex; }
.canvas { position: relative; flex: 1; min-width: 0; background: #222830; overflow: hidden; }
.plan { width: 100%; height: 100%; display: block; }
.viewlabels { position: absolute; left: 14px; top: 6px; display: flex; align-items: center; font: 11px/14px "DejaVu Sans", sans-serif; color: #a0a2a5; }
.viewlabels button { padding: 0 10px 0 6px; border-left: 1px solid #8a8c8f; height: 13px; }
.viewlabels button:first-child { border: 0; padding: 0 11px 0 0; }
.cube { position: absolute; right: 15px; top: 13px; width: 134px; display: flex; flex-direction: column; align-items: center; }
.ring { width: 134px; height: 136px; display: block; }
.ring text { text-anchor: middle; font-weight: bold; }
.dirs { fill: #b4b6b8; font-size: 22px; }
.top-face { fill: #4a5058; font: bold 12px "Noto Sans", sans-serif; }
.ucsname { margin-top: 20px; height: 13px; width: 73px; padding: 0 4px; border-radius: 4px; background: #70767c; color: #22282f; display: flex; align-items: center; justify-content: space-between; font-size: 11px; }
.ucsname select, .scale select { appearance: none; display: block; }
.drop { width: 11px; height: 7px; fill: #a4abb1; stroke: #22282f; }
.ucs { position: absolute; left: 12px; bottom: 11px; width: 76px; height: 76px; }
.ucs text { text-anchor: middle; fill: #f0f0f0; font: 300 18px Inter, sans-serif; }
.command { position: absolute; left: 50%; bottom: 0; transform: translateX(-50%); width: 498px; height: 25px; display: flex; align-items: center; padding-bottom: 1px; background: #444; border: 1px solid #3a3a3a; font: 11px/16px "Noto Sans", sans-serif; color: #d0d0d0; white-space: nowrap; }
.prompt { width: 38px; height: 100%; border-right: 1px solid #353535; }
.prompt svg { width: 24px; height: 12px; }
.cmdtext { padding-left: 4px; }
.cmdinput { flex: 1; min-width: 0; outline: 0; }
.help { width: 15px; height: 15px; border-radius: 50%; background: #a0a0a0; color: #333; font-weight: bold; font-size: 12px; }
.up { width: 18px; padding-left: 3px; }
.up svg { width: 6px; height: 5px; fill: #aaa; }
.side { width: 25px; flex: none; display: flex; flex-direction: column; background: #494949; border-left: 1px solid #414141; }
.sidetab { flex: 1; border-bottom: 1px solid #3f3f3f; padding: 0 4px 4px 0; }
.sidetab span { writing-mode: vertical-rl; transform: rotate(180deg); font: 12px/14px "Noto Sans", sans-serif; color: #c8c8c8; }

/* status bar */
.status { height: 24px; flex: none; display: flex; align-items: stretch; padding-right: 5px; border-top: 1px solid #444; border-left: 1px solid #444; font: 11px/16px "Noto Sans", sans-serif; }
.lay, .lay-plus { border-right: 1px solid #444; color: #999; width: 59px; padding-bottom: 2px; }
.lay-plus { width: 23px; }
.lay-on { background: #6b6b6b; color: #f0f0f0; }
.coords { margin-left: auto; padding: 0 3px 2px 5px; border-left: 1px solid #444; display: flex; align-items: center; color: #b0b0b0; width: 174px; white-space: nowrap; justify-content: space-between; }
.toggles { display: flex; align-items: center; padding-bottom: 1px; }
.toggles button { width: 22px; height: 20px; }
.toggles .on { width: 20px; margin: 0 1px; background: #5b8cc2; }
.scale { width: 32px; padding-bottom: 2px; display: flex; align-items: center; gap: 5px; color: #b8b8b8; }
.sdrop { width: 6px; height: 5px; fill: #ccc; }
.biggear { width: 16px; height: 16px; color: #d8d8d8; }
```
